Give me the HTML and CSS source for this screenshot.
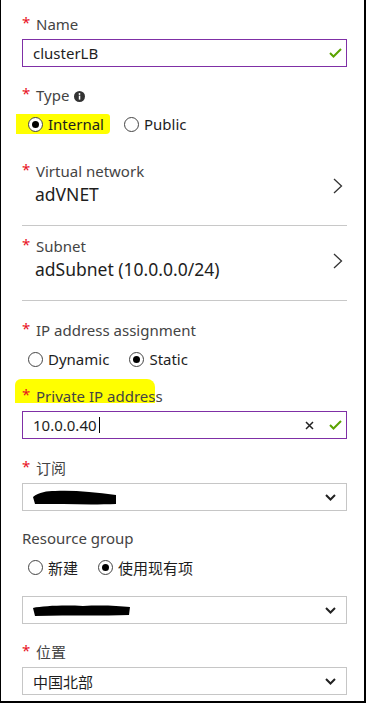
FILE: index.html
```html
<!DOCTYPE html>
<html lang="zh-CN">
<head>
<meta charset="utf-8">
<title>Load balancer</title>
<link rel="stylesheet" href="styles.css">
</head>
<body>
<div class="panel">

  <div class="field first">
    <div class="label"><span class="req">*</span>Name</div>
    <div class="input active">
      <span class="val">clusterLB</span>
      <span class="icons">
        <svg class="check" width="13" height="10" viewBox="0 0 13 10"><polyline points="1,5 4.5,8.5 12,1" fill="none" stroke="#5ba300" stroke-width="2"/></svg>
      </span>
    </div>
  </div>

  <div class="field gap18">
    <div class="label"><span class="req">*</span>Type<svg class="info" width="11" height="11" viewBox="0 0 11 11"><circle cx="5.5" cy="5.5" r="5.5" fill="#333"/><rect x="4.8" y="4.6" width="1.5" height="4" fill="#fff"/><circle cx="5.5" cy="3" r="0.9" fill="#fff"/></svg></div>
    <div class="radios">
      <span class="opt hl"><span class="radio on"></span>Internal</span>
      <span class="opt"><span class="radio"></span>Public</span>
    </div>
  </div>

  <div class="nav first-nav">
    <div class="nav-text">
      <div class="label"><span class="req">*</span>Virtual network</div>
      <div class="value">adVNET</div>
    </div>
    <svg class="chev" width="10" height="16" viewBox="0 0 10 16"><polyline points="1,1 8.5,8 1,15" fill="none" stroke="#333" stroke-width="1.3"/></svg>
  </div>

  <div class="nav">
    <div class="nav-text">
      <div class="label"><span class="req">*</span>Subnet</div>
      <div class="value">adSubnet (10.0.0.0/24)</div>
    </div>
    <svg class="chev" width="10" height="16" viewBox="0 0 10 16"><polyline points="1,1 8.5,8 1,15" fill="none" stroke="#333" stroke-width="1.3"/></svg>
  </div>

  <div class="field gap19">
    <div class="label"><span class="req">*</span>IP address assignment</div>
    <div class="radios">
      <span class="opt"><span class="radio"></span>Dynamic</span>
      <span class="opt"><span class="radio on"></span>Static</span>
    </div>
  </div>

  <div class="field gap17">
    <div class="label mark"><span class="req">*</span>Private IP address</div>
    <div class="input active">
      <span class="val">10.0.0.40<span class="caret"></span></span>
      <span class="icons">
        <svg class="clear" width="9" height="9" viewBox="0 0 9 9"><path d="M1 1L8 8M8 1L1 8" stroke="#222" stroke-width="1.5"/></svg>
        <svg class="check" width="13" height="10" viewBox="0 0 13 10"><polyline points="1,5 4.5,8.5 12,1" fill="none" stroke="#5ba300" stroke-width="2"/></svg>
      </span>
    </div>
  </div>

  <div class="field gap19">
    <div class="label"><span class="req">*</span>订阅</div>
    <div class="input select">
      <span class="val"><svg class="redact" width="84" height="18" viewBox="0 0 84 18"><path d="M0 9 C6 4 14 3 22 3 C40 2 60 4 83 7 L83 16 C60 17 30 16 2 16 Z" fill="#000"/></svg></span>
      <svg class="dd" width="11" height="7" viewBox="0 0 11 7"><polyline points="1,1 5.5,5.5 10,1" fill="none" stroke="#222" stroke-width="2"/></svg>
    </div>
  </div>

  <div class="field gap17">
    <div class="label plain">Resource group</div>
    <div class="radios">
      <span class="opt"><span class="radio"></span>新建</span>
      <span class="opt"><span class="radio on"></span>使用现有项</span>
    </div>
  </div>

  <div class="field gap19">
    <div class="input select">
      <span class="val"><svg class="redact" width="98" height="16" viewBox="0 0 98 16"><path d="M0 6 C10 4 30 3 50 4 C70 3 85 4 97 5 L96 13 C70 14 40 13 2 14 Z" fill="#000"/></svg></span>
      <svg class="dd" width="11" height="7" viewBox="0 0 11 7"><polyline points="1,1 5.5,5.5 10,1" fill="none" stroke="#222" stroke-width="2"/></svg>
    </div>
  </div>

  <div class="field gap18">
    <div class="label"><span class="req">*</span>位置</div>
    <div class="input select">
      <span class="val">中国北部</span>
      <svg class="dd" width="11" height="7" viewBox="0 0 11 7"><polyline points="1,1 5.5,5.5 10,1" fill="none" stroke="#222" stroke-width="2"/></svg>
    </div>
  </div>

</div>
</body>
</html>
```

FILE: styles.css
```css
html, body {
  margin: 0;
  padding: 0;
  background: #fff;
}

body {
  font-family: "Noto Sans", "Noto Sans CJK SC", sans-serif;
  font-size: 15px;
  color: #222;
}

.panel {
  box-sizing: border-box;
  width: 366px;
  height: 703px;
  border-left: 1px solid #000;
  border-right: 2px solid #000;
  border-bottom: 2px solid #000;
  padding: 14px 17px 0 21px;
  overflow: hidden;
}

.field.gap17 { margin-top: 17px; }
.field.gap18 { margin-top: 18px; }
.field.gap19 { margin-top: 19px; }

.label {
  display: flex;
  align-items: center;
  height: 20px;
  line-height: 20px;
  color: #444;
  white-space: nowrap;
}

.req {
  display: inline-block;
  flex-shrink: 0;
  width: 14px;
  color: #e81123;
  font-size: 15px;
  position: relative;
  top: -2px;
}

.info {
  flex-shrink: 0;
  margin-left: 5px;
  position: relative;
  top: 1px;
}

.label.mark {
  width: 140px;
  box-sizing: border-box;
  margin-left: -7px;
  padding-left: 7px;
  margin-top: -7px;
  padding-top: 7px;
  height: 27px;
  align-items: flex-start;
  background: linear-gradient(#ffff00, #ffff00) no-repeat 0 0 / 140px 24px;
  border-radius: 6px 8px 0 0;
}

.input {
  box-sizing: border-box;
  margin-top: 5px;
  height: 28px;
  border: 1px solid #c6c6c6;
  display: flex;
  align-items: center;
  justify-content: space-between;
  padding: 0 4px 0 10px;
  color: #1e1e1e;
}

.input.active {
  border-color: #7f2fa6;
}

.input.select {
  padding-right: 10px;
}

.val {
  display: flex;
  align-items: center;
  white-space: nowrap;
}

.caret {
  display: inline-block;
  width: 1px;
  height: 16px;
  background: #000;
  margin-left: 2px;
}

.icons {
  display: flex;
  align-items: center;
  gap: 15px;
}

.clear { margin-top: 1px; }

.redact { display: block; }

.radios {
  margin-top: 9px;
  height: 20px;
  display: flex;
  align-items: center;
  padding-left: 6px;
  color: #1e1e1e;
}

.opt {
  display: inline-flex;
  align-items: center;
  height: 20px;
  margin-right: 20px;
  white-space: nowrap;
}

.opt.hl {
  background: #ffff00;
  margin-left: -12px;
  padding-left: 12px;
  padding-right: 6px;
  margin-right: 14px;
  border-radius: 0 3px 4px 0;
}

.radio {
  box-sizing: border-box;
  width: 15px;
  height: 15px;
  border: 1px solid #444;
  border-radius: 50%;
  margin-right: 5px;
  display: inline-flex;
  align-items: center;
  justify-content: center;
  background: #fff;
}

.radio.on::after {
  content: "";
  width: 7px;
  height: 7px;
  border-radius: 50%;
  background: #000;
}

.nav {
  display: flex;
  align-items: center;
  justify-content: space-between;
  padding: 10px 4px 19px 0;
  border-bottom: 1px solid #c8c8c8;
}

.nav.first-nav {
  padding-top: 27px;
}

.value {
  margin-top: 1px;
  height: 24px;
  line-height: 24px;
  font-size: 17.5px;
  color: #1e1e1e;
  padding-left: 13px;
  white-space: nowrap;
}

.chev {
  flex-shrink: 0;
  margin-top: 4px;
}
```
